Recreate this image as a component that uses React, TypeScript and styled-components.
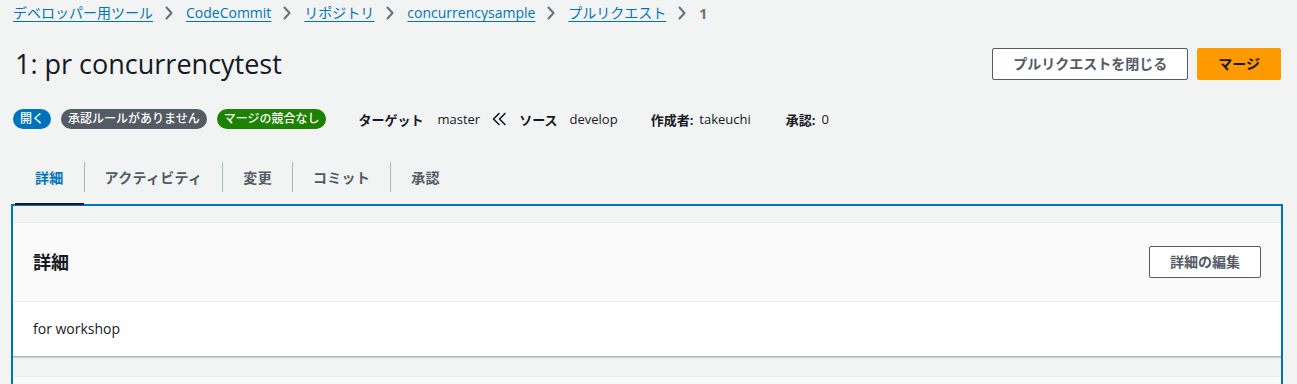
import React from "react";
import styled, { createGlobalStyle } from "styled-components";

const GlobalStyle = createGlobalStyle`
  body {
    margin: 0;
    background: #f2f3f3;
    font-family: "Open Sans", "Noto Sans CJK JP", sans-serif;
    color: #16191f;
  }
  * { box-sizing: border-box; }
`;

const crumbs = ["デベロッパー用ツール", "CodeCommit", "リポジトリ", "concurrencysample", "プルリクエスト"];
const tabs = ["詳細", "アクティビティ", "変更", "コミット", "承認"];

const Chevron = () => (
    <svg width="10" height="14" viewBox="0 0 10 14" fill="none">
        <path d="M2.5 1.5 L7.5 7 L2.5 12.5" stroke="#687078" strokeWidth="2" strokeLinecap="round" strokeLinejoin="round" />
    </svg>
);

const DoubleChevron = () => (
    <svg width="16" height="14" viewBox="0 0 16 14" fill="none">
        <path d="M8 1.5 L2.5 7 L8 12.5" stroke="#16191f" strokeWidth="1.6" strokeLinecap="round" strokeLinejoin="round" />
        <path d="M14 1.5 L8.5 7 L14 12.5" stroke="#16191f" strokeWidth="1.6" strokeLinecap="round" strokeLinejoin="round" />
    </svg>
);

const App: React.FC = () => {
    return (
        <>
            <GlobalStyle />
            <Page>
                <Breadcrumbs>
                    {crumbs.map((c) => (
                        <React.Fragment key={c}>
                            <CrumbLink href="#">{c}</CrumbLink>
                            <Separator><Chevron /></Separator>
                        </React.Fragment>
                    ))}
                    <CurrentCrumb>1</CurrentCrumb>
                </Breadcrumbs>

                <TitleRow>
                    <Title>1: pr concurrencytest</Title>
                    <Actions>
                        <Button>プルリクエストを閉じる</Button>
                        <Button $primary>マージ</Button>
                    </Actions>
                </TitleRow>

                <MetaRow>
                    <Badges>
                        <Badge $color="#0073bb">開く</Badge>
                        <Badge $color="#545b64">承認ルールがありません</Badge>
                        <Badge $color="#1d8102">マージの競合なし</Badge>
                    </Badges>
                    <MetaLabel>ターゲット</MetaLabel>
                    <MetaValue $gap={14} $after={11}>master</MetaValue>
                    <ArrowWrap><DoubleChevron /></ArrowWrap>
                    <MetaLabel>ソース</MetaLabel>
                    <MetaValue $gap={12} $after={33}>develop</MetaValue>
                    <MetaLabel>作成者:</MetaLabel>
                    <MetaValue $gap={6} $after={35}>takeuchi</MetaValue>
                    <MetaLabel>承認:</MetaLabel>
                    <MetaValue $gap={6} $after={0}>0</MetaValue>
                </MetaRow>

                <Tabs>
                    {tabs.map((t, i) => (
                        <React.Fragment key={t}>
                            {i > 0 && <TabDivider />}
                            <Tab $active={i === 0}>{t}</Tab>
                        </React.Fragment>
                    ))}
                </Tabs>

                <TabPanel>
                    <Card>
                        <CardHeader>
                            <CardTitle>詳細</CardTitle>
                            <Button>詳細の編集</Button>
                        </CardHeader>
                        <CardBody>for workshop</CardBody>
                    </Card>
                    <NextCard />
                </TabPanel>
            </Page>
        </>
    );
};

export default App;

const Page = styled.div`
    padding: 0 14px 0 11px;
`;

const Breadcrumbs = styled.nav`
    display: flex;
    align-items: center;
    height: 26px;
    padding-left: 2px;
    font-size: 14px;
`;

const CrumbLink = styled.a`
    color: #0073bb;
    text-decoration: underline;
    text-underline-offset: 3px;
    line-height: 20px;
`;

const Separator = styled.span`
    display: flex;
    align-items: center;
    margin: 0 12px 0 11px;
`;

const CurrentCrumb = styled.span`
    color: #687078;
    font-weight: 700;
`;

const TitleRow = styled.div`
    display: flex;
    justify-content: space-between;
    align-items: center;
    margin-top: 22px;
    padding: 0 2px 0 4px;
    height: 32px;
`;

const Title = styled.h1`
    margin: 0;
    font-size: 27px;
    font-weight: 400;
    line-height: 32px;
`;

const Actions = styled.div`
    display: flex;
    gap: 9px;
`;

const Button = styled.button<{ $primary?: boolean }>`
    height: 32px;
    padding: 0 20px;
    border: 1px solid ${(p) => (p.$primary ? "#ff9900" : "#545b64")};
    border-radius: 2px;
    background: ${(p) => (p.$primary ? "#ff9900" : "#ffffff")};
    color: ${(p) => (p.$primary ? "#16191f" : "#545b64")};
    font-family: inherit;
    font-size: 14px;
    font-weight: 700;
    line-height: 20px;
    cursor: pointer;
`;

const MetaRow = styled.div`
    display: flex;
    align-items: center;
    margin-top: 29px;
    padding-left: 2px;
    height: 20px;
    font-size: 13px;
`;

const Badges = styled.div`
    display: flex;
    gap: 10px;
    margin-right: 32px;
`;

const Badge = styled.span<{ $color: string }>`
    height: 20px;
    padding: 0 7px;
    border-radius: 10px;
    background: ${(p) => p.$color};
    color: #ffffff;
    font-size: 12px;
    font-weight: 500;
    line-height: 20px;
`;

const MetaLabel = styled.span`
    font-weight: 700;
`;

const MetaValue = styled.span<{ $gap: number; $after: number }>`
    margin-left: ${(p) => p.$gap}px;
    margin-right: ${(p) => p.$after}px;
`;

const ArrowWrap = styled.span`
    display: flex;
    align-items: center;
    margin-right: 12px;
`;

const Tabs = styled.div`
    display: flex;
    align-items: center;
    margin-top: 21px;
    padding-left: 4px;
    height: 54px;
`;

const Tab = styled.div<{ $active?: boolean }>`
    position: relative;
    display: flex;
    align-items: center;
    height: 54px;
    padding: 0 20px;
    color: ${(p) => (p.$active ? "#0073bb" : "#545b64")};
    font-size: 14px;
    font-weight: 700;
    letter-spacing: 0.3px;

    &::after {
        content: "";
        display: ${(p) => (p.$active ? "block" : "none")};
        position: absolute;
        left: 0;
        right: 0;
        bottom: -1px;
        height: 2px;
        background: #16191f;
    }
`;

const TabDivider = styled.span`
    width: 1px;
    height: 30px;
    background: #aab7b8;
`;

const TabPanel = styled.div`
    border: 2px solid #0073bb;
    padding-top: 16px;
    background: #f2f3f3;
`;

const Card = styled.div`
    border-top: 1px solid #eaeded;
    border-bottom: 1px solid #aab7b8;
    box-shadow: 0 1px 1px 0 rgba(0, 28, 36, 0.15);
`;

const CardHeader = styled.div`
    display: flex;
    justify-content: space-between;
    align-items: center;
    padding: 23px 20px;
    background: #fafafa;
    border-bottom: 1px solid #eaeded;
`;

const CardTitle = styled.h2`
    margin: 0;
    font-size: 18px;
    font-weight: 700;
    line-height: 22px;
`;

const CardBody = styled.div`
    padding: 17px 20px;
    background: #ffffff;
    font-size: 14px;
    line-height: 20px;
`;

const NextCard = styled.div`
    margin-top: 19px;
    height: 80px;
    border-top: 1px solid #eaeded;
    background: #fafafa;
`;
